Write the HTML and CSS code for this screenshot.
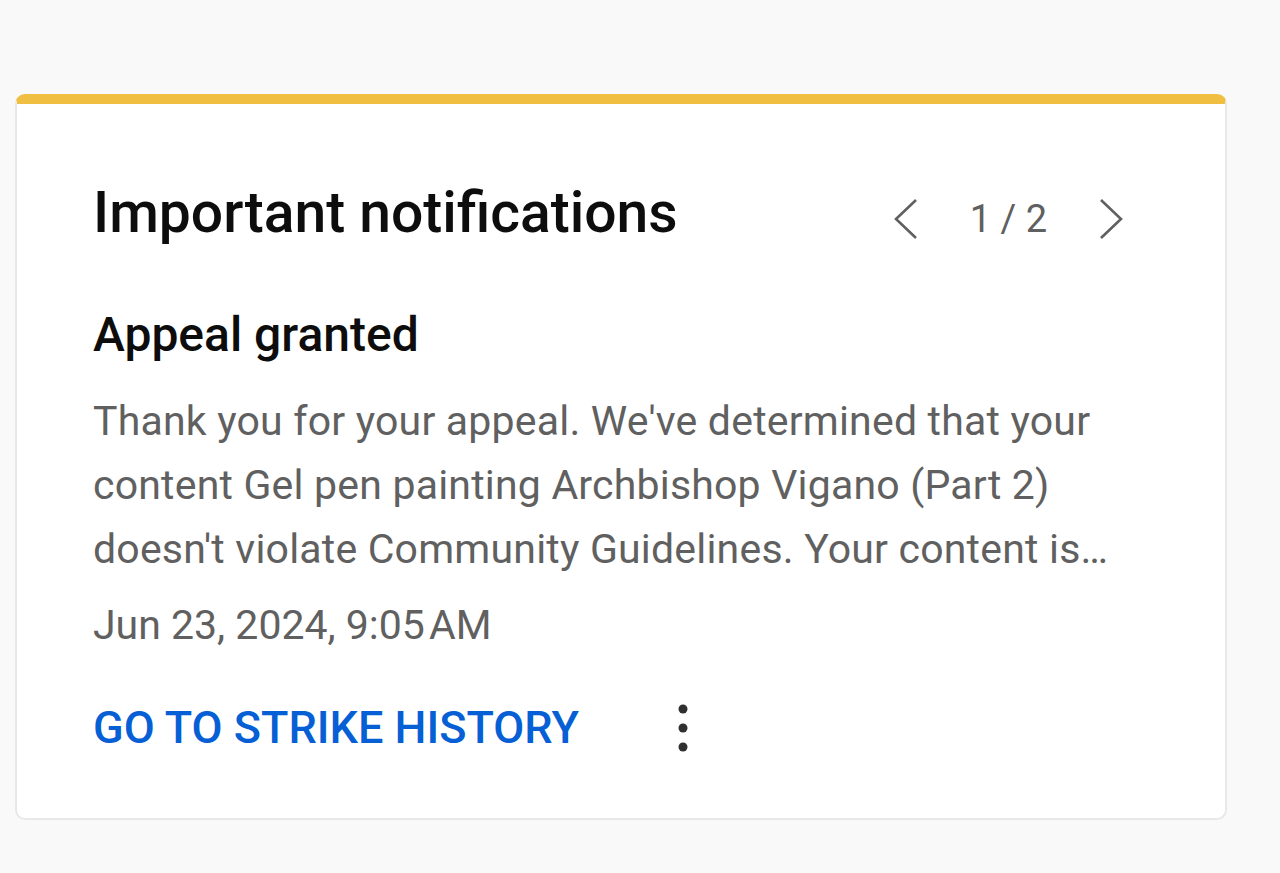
FILE: index.html
```html
<!DOCTYPE html>
<html lang="en">
<head>
    <meta charset="UTF-8">
    <title>Important notifications</title>
<link rel="stylesheet" href="styles.css">
</head>
<body>
    <main class="page">
        <section class="card">
            <div class="card-head">
                <h2 class="card-title">Important notifications</h2>
                <div class="pager">
                    <button class="pager-btn" aria-label="Previous">
                        <svg width="28" height="44" viewBox="0 0 28 44"><polyline points="24,3 4,22 24,41" fill="none" stroke="#606060" stroke-width="2.6"/></svg>
                    </button>
                    <span class="pager-count">1 / 2</span>
                    <button class="pager-btn" aria-label="Next">
                        <svg width="28" height="44" viewBox="0 0 28 44"><polyline points="4,3 24,22 4,41" fill="none" stroke="#606060" stroke-width="2.6"/></svg>
                    </button>
                </div>
            </div>
            <h3 class="notice-title">Appeal granted</h3>
            <p class="notice-text">Thank you for your appeal. We've determined that your content Gel pen painting Archbishop Vigano (Part 2) doesn't violate Community Guidelines. Your content is now available again.</p>
            <p class="notice-date">Jun 23, 2024, 9:05&#8202;AM</p>
            <div class="card-actions">
                <a class="action-link" href="#">GO TO STRIKE HISTORY</a>
                <button class="more-btn" aria-label="More">
                    <svg width="12" height="50" viewBox="0 0 12 50"><circle cx="6" cy="6" r="4.5" fill="#303030"/><circle cx="6" cy="25" r="4.5" fill="#303030"/><circle cx="6" cy="44" r="4.5" fill="#303030"/></svg>
                </button>
            </div>
        </section>
    </main>
</body>
</html>
```

FILE: styles.css
```css
*{
    margin: 0;
    box-sizing: border-box;
}
body{
    background-color: #f9f9f9;
    font-family: Roboto, "Noto Sans", Arial, sans-serif;
}
.page{
    padding: 94px 53px 0 15px;
}
.card{
    background-color: #fff;
    border: 2px solid #e8e8e8;
    border-top: 10px solid #f0bf42;
    border-radius: 10px;
    height: 726px;
    padding: 75px 100px 0 76px;
}
.card-head{
    display: flex;
    justify-content: space-between;
    align-items: center;
}
.card-title{
    font-size: 57px;
    font-weight: 500;
    color: #0d0d0d;
}
.pager{
    display: flex;
    align-items: center;
    gap: 50px;
    padding-top: 12px;
}
.pager-btn{
    background: none;
    border: none;
    padding: 0;
    display: flex;
}
.pager-count{
    font-size: 38px;
    color: #606060;
}
.notice-title{
    margin-top: 60px;
    font-size: 48px;
    font-weight: 500;
    color: #0d0d0d;
}
.notice-text{
    margin-top: 26px;
    font-size: 41px;
    letter-spacing: 0.2px;
    line-height: 64px;
    color: #606060;
    display: -webkit-box;
    -webkit-line-clamp: 3;
    -webkit-box-orient: vertical;
    overflow: hidden;
}
.notice-date{
    margin-top: 20px;
    font-size: 41px;
    color: #606060;
}
.card-actions{
    display: flex;
    align-items: center;
    gap: 98px;
    margin-top: 52px;
}
.action-link{
    font-size: 45px;
    font-weight: 500;
    color: #065fd4;
    text-decoration: none;
}
.more-btn{
    background: none;
    border: none;
    padding: 0;
    display: flex;
}
```
